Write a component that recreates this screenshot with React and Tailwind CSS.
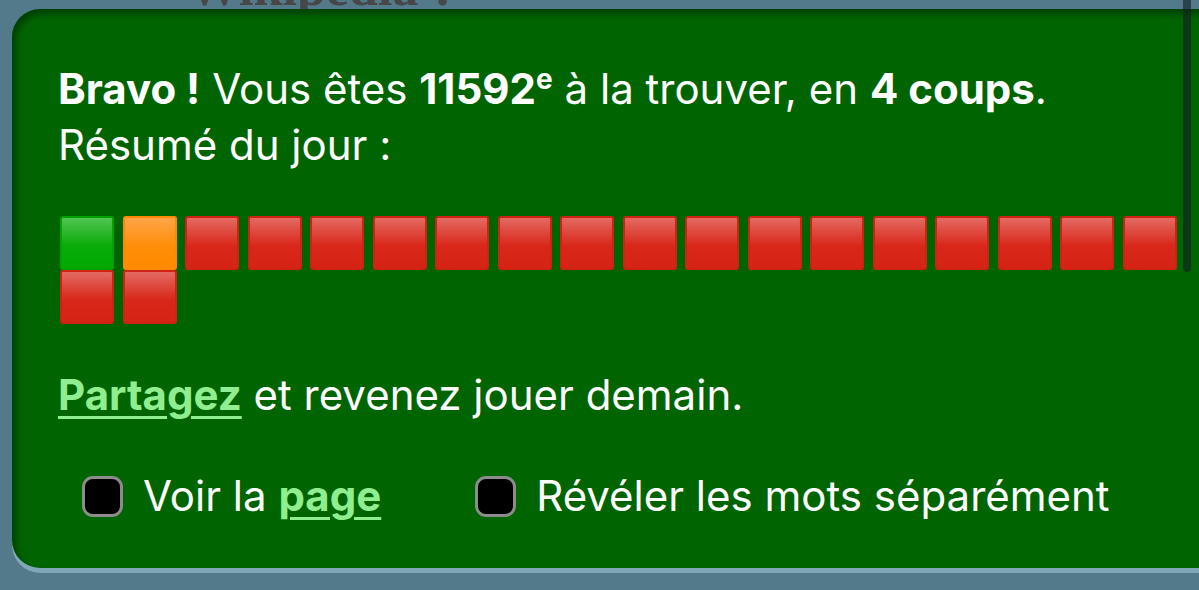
import React from 'react';

const SQUARES = ['green', 'orange', ...Array(18).fill('red')];

const squareStyles = {
  green: 'border-[#00a300] bg-[linear-gradient(to_bottom,#52c552,#0aab0a_55%,#00a800)]',
  orange: 'border-[#ff8a00] bg-[linear-gradient(to_bottom,#ffa548,#ff8e0a_55%,#ff8a00)]',
  red: 'border-[#cf2213] bg-[linear-gradient(to_bottom,#e46a62,#d9281b_55%,#d52314)]',
};

const Square = ({ color }) => (
  <div className={`w-[54px] h-[54px] rounded-[3px] border-[2px] ${squareStyles[color]}`} />
);

const Checkbox = ({ children }) => (
  <label className="flex items-center gap-[20px]">
    <span className="w-[41px] h-[41px] rounded-[11px] border-[3px] border-[#8c8c8c] bg-black" />
    <span>{children}</span>
  </label>
);

const linkCls = 'font-bold text-[#90ee90] underline underline-offset-[6px] decoration-[3px]';

const App = () => {
  return (
    <div
      className="relative w-[1199px] h-[590px] overflow-hidden bg-[#527a8a]"
      style={{ fontFamily: 'Inter, "Noto Sans", sans-serif' }}
    >
      {/* page title, mostly hidden under the result card */}
      <h1
        className="h-[0px] -mt-[36px] pl-[188px] text-[52px] leading-[48px] font-bold text-[#474747]"
        style={{ fontFamily: '"Liberation Serif", serif' }}
      >
        Wikipédia ?
      </h1>

      <div className="relative mt-[45px] ml-[12px] w-[1230px] h-[559px] rounded-[28px] bg-[#006400] shadow-[inset_4px_5px_6px_rgba(0,0,0,0.35),0_5px_0_#80a7b7] pl-[46px] pt-[52px] text-white text-[42px] leading-[56px]">
        <p>
          <b>Bravo !</b> Vous êtes <b>11592<sup className="text-[28px] leading-none -top-[15px]">e</sup></b> à la trouver, en <b>4 coups</b>.
        </p>
        <p>Résumé du jour :</p>

        <div className="mt-[43px] w-[1130px] ml-[2px] flex flex-wrap gap-x-[8.5px]">
          {SQUARES.map((c, i) => (
            <Square key={i} color={c} />
          ))}
        </div>

        <p className="mt-[43px]">
          <a className={linkCls}>Partagez</a> et revenez jouer demain.
        </p>

        <div className="mt-[45px] ml-[24px] flex items-center gap-[94px]">
          <Checkbox>
            Voir la <a className={linkCls}>page</a>
          </Checkbox>
          <Checkbox>Révéler les mots séparément</Checkbox>
        </div>
      </div>

      {/* scroll indicator */}
      <div className="absolute top-0 left-[1183px] w-[8px] h-[272px] rounded-b-full bg-[rgba(18,28,38,0.6)]" />
    </div>
  );
};

export default App;
